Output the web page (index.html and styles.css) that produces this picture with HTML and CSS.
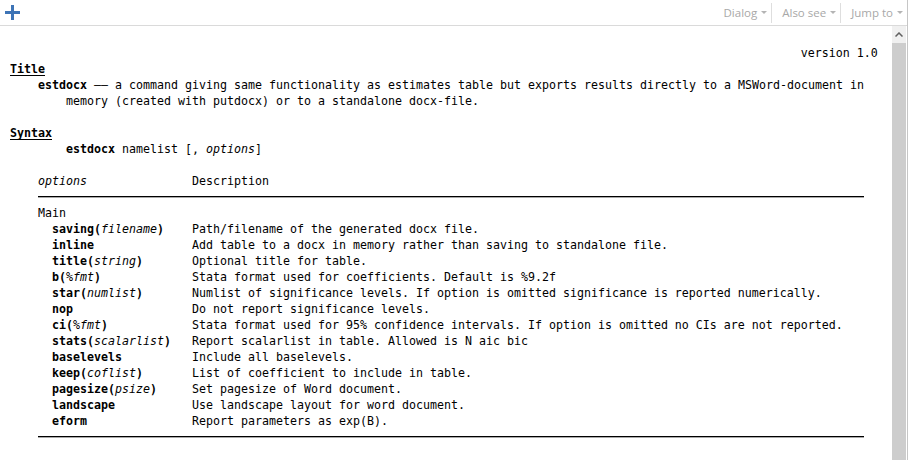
FILE: index.html
```html
<!DOCTYPE html>
<html>
<head>
<meta charset="utf-8">
<link rel="stylesheet" href="styles.css">
</head>
<body>
<div class="window">
  <div class="pane">
    <div class="toolbar">
      <svg class="plus" width="15" height="15" viewBox="0 0 15 15"><path d="M7.5 0V15M0 7.5H15" stroke="#3d74b6" stroke-width="3" fill="none"/></svg>
      <div class="menus">
        <span class="menu">Dialog<i class="caret"></i></span>
        <span class="sep"></span>
        <span class="menu">Also see<i class="caret"></i></span>
        <span class="sep"></span>
        <span class="menu">Jump to<i class="caret"></i></span>
      </div>
    </div>
    <div class="body">
      <div class="content">
        <div class="version">version 1.0</div>
        <div class="hd">Title</div>
        <div class="hang"><b>estdocx</b> <span class="dash">——</span> a command giving same functionality as estimates table but exports results directly to a MSWord-document in<br>memory (created with putdocx) or to a standalone docx-file.</div>
        <div class="blank"></div>
        <div class="hd">Syntax</div>
        <div class="syn"><b>estdocx</b> namelist [, <i>options</i>]</div>
        <div class="blank"></div>
        <div class="table">
          <div class="row"><span><i>options</i></span><span>Description</span></div>
          <div class="rule"></div>
          <div class="row"><span>Main</span><span></span></div>
          <div class="row"><span class="opt"><b>saving(</b><i>filename</i><b>)</b></span><span>Path/filename of the generated docx file.</span></div>
          <div class="row"><span class="opt"><b>inline</b></span><span>Add table to a docx in memory rather than saving to standalone file.</span></div>
          <div class="row"><span class="opt"><b>title(</b><i>string</i><b>)</b></span><span>Optional title for table.</span></div>
          <div class="row"><span class="opt"><b>b(</b><i>%fmt</i><b>)</b></span><span>Stata format used for coefficients. Default is %9.2f</span></div>
          <div class="row"><span class="opt"><b>star(</b><i>numlist</i><b>)</b></span><span>Numlist of significance levels. If option is omitted significance is reported numerically.</span></div>
          <div class="row"><span class="opt"><b>nop</b></span><span>Do not report significance levels.</span></div>
          <div class="row"><span class="opt"><b>ci(</b><i>%fmt</i><b>)</b></span><span>Stata format used for 95% confidence intervals. If option is omitted no CIs are not reported.</span></div>
          <div class="row"><span class="opt"><b>stats(</b><i>scalarlist</i><b>)</b></span><span>Report scalarlist in table. Allowed is N aic bic</span></div>
          <div class="row"><span class="opt"><b>baselevels</b></span><span>Include all baselevels.</span></div>
          <div class="row"><span class="opt"><b>keep(</b><i>coflist</i><b>)</b></span><span>List of coefficient to include in table.</span></div>
          <div class="row"><span class="opt"><b>pagesize(</b><i>psize</i><b>)</b></span><span>Set pagesize of Word document.</span></div>
          <div class="row"><span class="opt"><b>landscape</b></span><span>Use landscape layout for word document.</span></div>
          <div class="row"><span class="opt"><b>eform</b></span><span>Report parameters as exp(B).</span></div>
          <div class="rule"></div>
        </div>
      </div>
      <div class="scrollbar">
        <div class="sb-up"><svg width="8" height="5" viewBox="0 0 8 5"><path d="M0.5 4.5L4 1L7.5 4.5" stroke="#606060" stroke-width="1.5" fill="none"/></svg></div>
        <div class="thumb"></div>
      </div>
      <div class="gap"></div>
    </div>
  </div>
  <div class="edge"></div>
</div>
</body>
</html>
```

FILE: styles.css
```css
html, body {
  margin: 0;
  padding: 0;
  background: #fff;
}
body {
  width: 911px;
  height: 460px;
  overflow: hidden;
}
.window {
  display: flex;
  width: 911px;
  height: 460px;
}
.pane {
  width: 907px;
  display: flex;
  flex-direction: column;
}
.edge {
  width: 4px;
  background: linear-gradient(to right, #c6c6c6 0 1px, #fff 1px);
}
.toolbar {
  height: 25px;
  border-bottom: 1px solid #dadada;
  display: flex;
  align-items: center;
  justify-content: space-between;
  padding-left: 5px;
}
.plus {
  display: block;
}
.menus {
  display: flex;
  align-items: center;
  height: 100%;
  font-family: "Open Sans", "Noto Sans", sans-serif;
  font-size: 11.5px;
  color: #a8a8a8;
}
.menu {
  display: flex;
  align-items: center;
  padding: 0 4px 0 10px;
}
.caret {
  display: inline-block;
  width: 0;
  height: 0;
  margin-left: 4px;
  border-left: 3px solid transparent;
  border-right: 3px solid transparent;
  border-top: 3px solid #b4b4b4;
}
.sep {
  width: 1px;
  height: 20px;
  background: #dedede;
}
.body {
  flex: 1;
  display: flex;
  min-height: 0;
}
.content {
  flex: 1;
  padding: 19px 0 0 10px;
  font-family: "DejaVu Sans Mono", "Liberation Mono", monospace;
  font-size: 11.63px;
  line-height: 16px;
  color: #000;
  white-space: nowrap;
  overflow: hidden;
}
.content b {
  font-weight: bold;
}
.content i {
  font-style: italic;
}
.version {
  width: 124ch;
  text-align: right;
}
.hd {
  font-weight: bold;
  text-decoration: underline;
  text-underline-offset: 2px;
}
.hang {
  padding-left: 8ch;
  text-indent: -4ch;
}
.dash {
  letter-spacing: 0;
}
.syn {
  padding-left: 8ch;
}
.blank {
  height: 16px;
}
.table {
  margin-left: 4ch;
}
.row {
  display: grid;
  grid-template-columns: 22ch 1fr;
  height: 16px;
}
.opt {
  padding-left: 2ch;
}
.rule {
  width: 118ch;
  height: 1px;
  background: #000;
  margin: 7px 0 8px;
  box-shadow: 0 0.5px 0 #555;
}
.scrollbar {
  width: 14px;
  display: flex;
  flex-direction: column;
  background: #f0f0f0;
}
.sb-up {
  height: 17px;
  display: flex;
  align-items: center;
  justify-content: center;
  background: #f0f0f0;
}
.sb-up svg {
  display: block;
}
.thumb {
  flex: 1;
  background: #cdcdcd;
}
.gap {
  width: 1px;
}
```
